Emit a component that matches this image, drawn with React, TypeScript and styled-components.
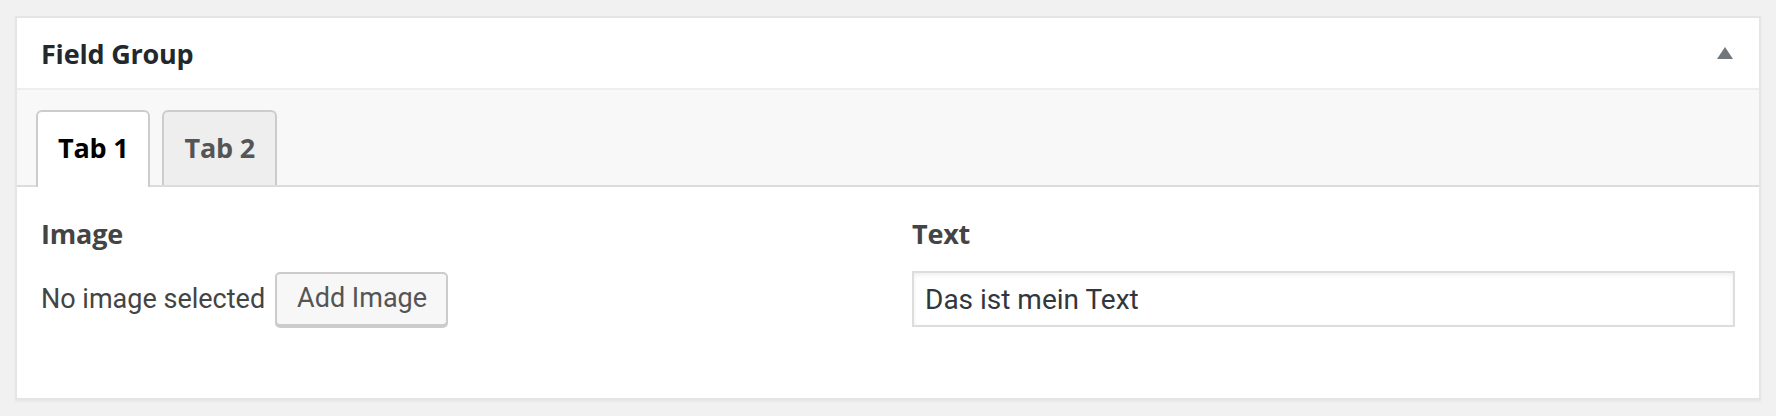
import React from "react";
import styled, { createGlobalStyle } from "styled-components";

const GlobalStyle = createGlobalStyle`
  html, body {
    margin: 0;
    padding: 0;
    background: #f1f1f1;
  }
  body {
    font-family: Roboto, "Liberation Sans", Arial, sans-serif;
    color: #444;
  }
  * { box-sizing: border-box; }
`;

const strongFont = `"Open Sans", Roboto, "Liberation Sans", Arial, sans-serif`;

const Page = styled.div`
  padding: 16px 15px 0;
  height: 416px;
`;

const Postbox = styled.section`
  background: #fff;
  border: 2px solid #e5e5e5;
  box-shadow: 0 2px 2px rgba(0, 0, 0, 0.04);
`;

const Header = styled.div`
  display: flex;
  align-items: center;
  justify-content: space-between;
  height: 72px;
  padding-left: 24px;
  border-bottom: 2px solid #eee;
`;

const Title = styled.h2`
  margin: 0;
  font-family: ${strongFont};
  font-size: 27px;
  font-weight: 700;
  letter-spacing: -0.2px;
  color: #23282d;
  line-height: 38px;
  padding-top: 1px;
`;

const Toggle = styled.button`
  width: 68px;
  height: 70px;
  border: 0;
  padding: 0;
  background: transparent;
  display: flex;
  align-items: center;
  justify-content: center;
`;

const Triangle = styled.span`
  width: 0;
  height: 0;
  border-left: 8px solid transparent;
  border-right: 8px solid transparent;
  border-bottom: 12px solid #72777c;
`;

const TabBar = styled.div`
  display: flex;
  gap: 12px;
  padding: 20px 19px 0;
  background: #f8f8f8;
  border-bottom: 2px solid #dcdcdc;
`;

const Tab = styled.button<{ $active?: boolean }>`
  display: flex;
  align-items: center;
  height: ${(p) => (p.$active ? "77px" : "75px")};
  margin-bottom: ${(p) => (p.$active ? "-2px" : "0")};
  padding: ${(p) => (p.$active ? "0 20px 5px" : "0 20px 3px")};
  border: 2px solid #ccc;
  border-bottom: 0;
  border-radius: 6px 6px 0 0;
  background: ${(p) => (p.$active ? "#fff" : "#eee")};
  color: ${(p) => (p.$active ? "#000" : "#555")};
  font-family: ${strongFont};
  font-size: 27px;
  font-weight: 700;
  letter-spacing: -0.2px;
  cursor: pointer;
`;

const Fields = styled.div`
  display: grid;
  grid-template-columns: 1fr 1fr;
`;

const Field = styled.div`
  padding: 28px 24px 71px;
  display: flex;
  flex-direction: column;
  gap: 18px;
`;

const Label = styled.label`
  font-family: ${strongFont};
  font-size: 27px;
  font-weight: 700;
  letter-spacing: -0.2px;
  line-height: 38px;
  color: #444;
`;

const ImageRow = styled.div`
  display: flex;
  align-items: center;
  gap: 10px;
  height: 56px;
  font-size: 27px;
  color: #444;
`;

const Button = styled.button`
  height: 54px;
  padding: 0 19px 2px 20px;
  border: 2px solid #ccc;
  border-radius: 5px;
  background: #f7f7f7;
  box-shadow: 0 2px 0 #ccc;
  color: #555;
  font-family: inherit;
  font-size: 27px;
  cursor: pointer;
`;

const TextInput = styled.input`
  height: 56px;
  width: 100%;
  padding: 0 11px;
  border: 2px solid #ddd;
  background: #fff;
  box-shadow: inset 0 2px 4px rgba(0, 0, 0, 0.07);
  color: #32373c;
  font-family: inherit;
  font-size: 28px;
  outline: none;
`;

export default function App() {
  return (
    <>
      <GlobalStyle />
      <Page>
        <Postbox>
          <Header>
            <Title>Field Group</Title>
            <Toggle aria-label="Toggle panel">
              <Triangle />
            </Toggle>
          </Header>
          <TabBar>
            <Tab $active>Tab 1</Tab>
            <Tab>Tab 2</Tab>
          </TabBar>
          <Fields>
            <Field>
              <Label>Image</Label>
              <ImageRow>
                <span>No image selected</span>
                <Button>Add Image</Button>
              </ImageRow>
            </Field>
            <Field>
              <Label>Text</Label>
              <TextInput defaultValue="Das ist mein Text" />
            </Field>
          </Fields>
        </Postbox>
      </Page>
    </>
  );
}
